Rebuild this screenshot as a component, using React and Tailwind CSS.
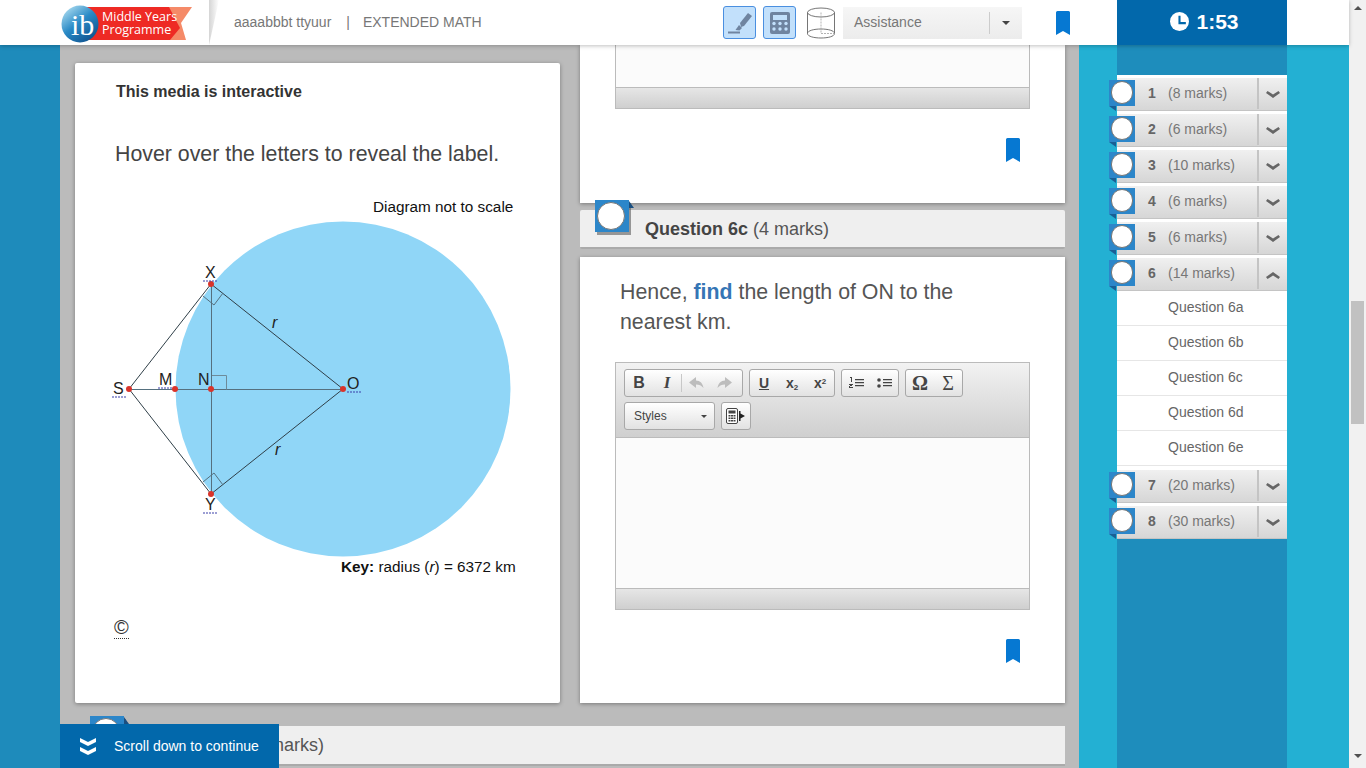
import React from 'react';

const sections = [
  { n: 1, marks: 8 },
  { n: 2, marks: 6 },
  { n: 3, marks: 10 },
  { n: 4, marks: 6 },
  { n: 5, marks: 6 },
  { n: 6, marks: 14, open: true },
  { n: 7, marks: 20 },
  { n: 8, marks: 30 },
];

const subQuestions = ['Question 6a', 'Question 6b', 'Question 6c', 'Question 6d', 'Question 6e'];

function Bookmark({ className }) {
  return (
    <svg viewBox="0 0 14 24" className={className}>
      <path d="M1.500 0h11a1.500 1.500 0 0 1 1.500 1.500V24l-7-4-7 4V1.500A1.500 1.500 0 0 1 1.500 0z" fill="#0678d2" />
    </svg>
  );
}

function Logo() {
  return (
    <svg width="132" height="42" viewBox="0 0 132 42" className="shrink-0">
      <defs>
        <linearGradient id="ibBlue" x1="0.1" y1="0.1" x2="0.8" y2="1">
          <stop offset="0" stopColor="#a5d8ee" />
          <stop offset="0.45" stopColor="#2a8ac6" />
          <stop offset="1" stopColor="#0d4f8c" />
        </linearGradient>
      </defs>
      <path d="M105 5h26l-11 16 5 17h-20z" fill="#f58a68" />
      <path d="M20 5h88l11 21-10 12H20z" fill="#ee2a24" />
      <circle cx="19" cy="22" r="18.500" fill="url(#ibBlue)" />
      <text x="10" y="33" fontSize="30" fontFamily="Liberation Serif" fill="#fff">ib</text>
      <text x="41" y="18.500" fontSize="12.500" fontFamily="Open Sans" fill="#fff">Middle Years</text>
      <text x="41" y="31.500" fontSize="12.500" fontFamily="Open Sans" fill="#fff">Programme</text>
    </svg>
  );
}

function Highlighter() {
  return (
    <svg width="24" height="24" viewBox="0 0 24 24" fill="#6f84a0">
      <path d="M12 12 20 2l4 3-8 10-3 1z" />
      <path d="M0 20.500h12V22.500H0z" />
      <path d="M11 14l3 3-2.500 2.500-4-.5z" />
    </svg>
  );
}

function Calculator() {
  return (
    <svg width="20" height="22" viewBox="0 0 20 22">
      <rect width="20" height="22" rx="2" fill="#6f84a0" />
      <rect x="3" y="3" width="14" height="5" fill="#c2e0fb" />
      {[4, 10, 16].map((x) =>
        [11.5, 17].map((y) => <circle key={`${x}-${y}`} cx={x} cy={y} r="1.700" fill="#c2e0fb" />)
      )}
    </svg>
  );
}

function Cylinder() {
  return (
    <svg width="30" height="32" viewBox="0 0 30 32" fill="none" stroke="#666" strokeWidth="0.9">
      <ellipse cx="15" cy="5.500" rx="13.500" ry="4.500" fill="#fff" />
      <path d="M1.500 5.500v21M28.500 5.500v21" />
      <path d="M1.500 26.500c0 6 27 6 27 0 0-6-27-6-27 0z" />
      <path d="M15 5.500v21M15 26.500h13.500" stroke="#aaa" strokeDasharray="2 1" />
    </svg>
  );
}

function ClockIcon() {
  return (
    <svg width="19" height="19" viewBox="0 0 18 18">
      <circle cx="9" cy="9" r="9" fill="#fff" />
      <path d="M8 3.500h2v6h5v2H8z" fill="#0268ab" />
    </svg>
  );
}

function Chevron({ up }) {
  return (
    <svg width="14" height="8" viewBox="0 0 14 8">
      <path d={up ? 'M0 6 7 1l7 5-1.500 2L7 4.500 1.500 8z' : 'M0 2 1.500 0 7 3.500 12.500 0 14 2 7 7z'} fill="#666" />
    </svg>
  );
}

function Header() {
  return (
    <header className="relative z-20 flex h-[45px] shrink-0 items-center bg-white pl-[61px] shadow-[0_1px_4px_rgba(0,0,0,0.25)]">
      <Logo />
      <div className="ml-[16px] h-[45px] w-[10px] bg-gradient-to-r from-[#d5d5d5] to-white [clip-path:polygon(0_0,100%_0,0_100%)]" />
      <div className="ml-[15px] w-[247px] whitespace-nowrap text-[14px] text-[#777]">
        aaaabbbt ttyuur<span className="ml-[15px] mr-[13px]">|</span>EXTENDED MATH
      </div>
      <div className="ml-[242px] flex h-[33px] w-[33px] items-center justify-center rounded-[3px] border border-[#4a8fe0] bg-[#c2e0fb]">
        <Highlighter />
      </div>
      <div className="ml-[7px] flex h-[33px] w-[33px] items-center justify-center rounded-[3px] border border-[#4a8fe0] bg-[#c2e0fb]">
        <Calculator />
      </div>
      <div className="ml-[10px]">
        <Cylinder />
      </div>
      <div className="ml-[7px] flex h-[32px] w-[179px] items-center bg-gradient-to-b from-[#f6f6f6] to-[#ececec] pl-[11px] text-[14px] text-[#777]">
        <span className="w-[135px]">Assistance</span>
        <span className="h-[22px] w-px bg-[#ccc]" />
        <span className="ml-[12px] h-0 w-0 border-x-[4px] border-t-[4px] border-x-transparent border-t-[#444]" />
      </div>
      <Bookmark className="ml-[34px] h-[24px] w-[14px]" />
      <div className="ml-[47px] flex h-[45px] w-[170px] items-center justify-center gap-[7px] bg-[#0268ab] pb-[2px] pl-[5px] text-[21px] font-bold text-white">
        <ClockIcon />
        1:53
      </div>
    </header>
  );
}

function QuestionBadge({ className }) {
  return (
    <div className={`absolute h-[32px] w-[34px] bg-[#2c86c9] shadow-[2px_3px_0_rgba(90,90,90,0.6)] ${className}`}>
      <div className="absolute left-[2px] top-[2px] h-[28px] w-[28px] rounded-full border border-[#777] bg-white" />
      <div className="absolute left-full top-[1px] h-0 w-0 border-b-[7px] border-r-[5px] border-b-[#1a4f80] border-r-transparent" />
    </div>
  );
}

function TbButton({ children, className = '' }) {
  return <span className={`flex h-full w-[28px] items-center justify-center text-[#444] ${className}`}>{children}</span>;
}

function TbGroup({ width, children }) {
  return (
    <div
      style={{ width }}
      className="flex h-[28px] items-center rounded-[3px] border border-[#a8a8a8] bg-gradient-to-b from-white to-[#e2e2e2]"
    >
      {children}
    </div>
  );
}

function Arrow({ flip }) {
  return (
    <svg width="15" height="12" viewBox="0 0 15 12" className={flip ? '-scale-x-100' : ''}>
      <path d="M7 0 0 5.500 7 11V7.500c3 0 5.500 1 7.500 3.500C14 6.500 11 3.500 7 3.500z" fill="#bdbdbd" />
    </svg>
  );
}

function ListIcon({ bullets }) {
  return (
    <svg width="15" height="12" viewBox="0 0 15 12" fill="#444">
      {bullets ? (
        <>
          <circle cx="2" cy="3" r="1.800" />
          <circle cx="2" cy="9" r="1.800" />
        </>
      ) : (
        <path d="M1 0h2v5H2V1H1zM0 7h4v1H1v2h3v1H0V9h3V8H0z" />
      )}
      <path d="M6 2h9v1.300H6zM6 5h9v1.300H6zM6 8h9v1.300H6z" />
    </svg>
  );
}

function CalcTool() {
  return (
    <svg width="20" height="16" viewBox="0 0 20 16">
      <rect x="0.500" y="0.500" width="11" height="15" rx="1.500" fill="#fff" stroke="#444" />
      <path d="M2.500 2.500h7v3h-7zM2.500 7h2v1.500h-2zM5 7h2v1.500H5zM7.500 7h2v1.500h-2zM2.500 9.500h2V11h-2zM5 9.500h2V11H5zM7.500 9.500h2V11h-2zM2.500 12h2v1.500h-2zM5 12h2v1.500H5zM7.500 12h2v1.500h-2z" fill="#444" />
      <path d="M13 3h1.500v2.500L19 8l-4.500 2.500V13H13z" fill="#222" />
    </svg>
  );
}

function Editor() {
  return (
    <div className="mt-[25px] ml-[35px] w-[415px] border border-[#bbb]">
      <div className="h-[74px] bg-gradient-to-b from-[#f2f2f2] to-[#cfcfcf] px-[8px] pt-[6px]">
        <div className="flex gap-[6px]">
          <TbGroup width={119}>
            <TbButton><span className="text-[16px] font-bold">B</span></TbButton>
            <TbButton><span className="font-['Liberation_Serif'] text-[17px] font-bold italic">I</span></TbButton>
            <span className="h-[18px] w-px bg-[#c8c8c8]" />
            <TbButton><Arrow /></TbButton>
            <TbButton><Arrow flip /></TbButton>
          </TbGroup>
          <TbGroup width={86}>
            <TbButton><span className="text-[14px] font-bold underline">U</span></TbButton>
            <TbButton><span className="text-[14px] font-bold">x<sub className="text-[8px]">2</sub></span></TbButton>
            <TbButton><span className="text-[14px] font-bold">x<sup className="text-[8px]">2</sup></span></TbButton>
          </TbGroup>
          <TbGroup width={58}>
            <TbButton><ListIcon /></TbButton>
            <TbButton><ListIcon bullets /></TbButton>
          </TbGroup>
          <TbGroup width={58}>
            <TbButton><span className="font-['Liberation_Serif'] text-[20px] font-bold">Ω</span></TbButton>
            <TbButton><span className="font-['Liberation_Serif'] text-[20px]">Σ</span></TbButton>
          </TbGroup>
        </div>
        <div className="mt-[5px] flex gap-[6px]">
          <TbGroup width={91}>
            <span className="ml-[9px] w-[67px] text-[12px] text-[#444]">Styles</span>
            <span className="h-0 w-0 border-x-[3px] border-t-[3px] border-x-transparent border-t-[#444]" />
          </TbGroup>
          <TbGroup width={30}>
            <TbButton><CalcTool /></TbButton>
          </TbGroup>
        </div>
      </div>
      <div className="h-[151px] border-t border-[#bbb] bg-[#fbfbfb]" />
      <div className="h-[21px] border-t border-[#bbb] bg-gradient-to-b from-[#e6e6e6] to-[#cfcfcf]" />
    </div>
  );
}

function Diagram() {
  const dots = [[129, 389], [175, 389], [211, 389], [343, 389], [211, 284], [211, 494]];
  return (
    <svg width="485" height="460" viewBox="75 180 485 460" className="absolute left-0 top-[117px]">
      <circle cx="343" cy="389" r="167.500" fill="#90d6f7" />
      <text x="373" y="212" fontSize="15.300" fill="#111" fontFamily="Liberation Sans">Diagram not to scale</text>
      <g fill="none" stroke="#2f3f48" strokeWidth="1">
        <path d="M129 389 211 284 343 389 211 494z" />
        <path d="M129 389.500H343M211.500 284V494" stroke="#55707f" />
        <path d="M203 296l11 9 9-12M203 482l11-9 9 12" stroke="#55707f" />
        <path d="M212 375.500h14.500v14" stroke="#6d8b9a" />
      </g>
      <g fill="#d9342b">
        {dots.map(([cx, cy]) => (
          <circle key={`${cx}-${cy}`} cx={cx} cy={cy} r="3" />
        ))}
      </g>
      <g fontSize="16" fill="#222" fontFamily="Liberation Sans">
        <text x="205" y="278">X</text>
        <text x="113" y="394">S</text>
        <text x="159" y="385">M</text>
        <text x="198" y="385">N</text>
        <text x="347" y="389">O</text>
        <text x="205" y="510">Y</text>
        <text x="272" y="328" fontStyle="italic">r</text>
        <text x="275" y="455" fontStyle="italic">r</text>
      </g>
      <g stroke="#3b3fa8" strokeDasharray="2 1" strokeWidth="1">
        <path d="M203 281h14M112 397h14M158 388h15M347 392h14M203 513h14" />
      </g>
      <text x="341" y="572" fontSize="15.300" fill="#111" fontFamily="Liberation Sans">
        <tspan fontWeight="bold">Key:</tspan> radius (<tspan fontStyle="italic">r</tspan>) = 6372 km
      </text>
    </svg>
  );
}

function SideItem({ n, marks, open }) {
  return (
    <div className="relative h-[36px] bg-white pt-[3px]">
      <div className="flex h-[33px] items-center border-b border-[#c4c4c4] bg-gradient-to-b from-[#f0f0f0] to-[#d6d6d6] pb-[2px] pl-[31px] text-[14px]">
        <span className="w-[20px] font-bold text-[#666]">{n}</span>
        <span className="w-[89px] text-[#777]">({marks} marks)</span>
        <span className="flex h-[31px] w-[30px] items-center justify-center border-l-2 border-[#c4c4c4] pt-[4px]">
          <Chevron up={open} />
        </span>
      </div>
      <div className="absolute -left-[8px] top-[5px] h-[26px] w-[26px] bg-[#2c86c9]">
        <div className="absolute left-[2px] top-[1px] h-[23px] w-[22px] rounded-full border border-[#777] bg-white" />
        <div className="absolute left-0 top-full h-0 w-0 border-t-[5px] border-l-[7px] border-t-[#1a5f95] border-l-transparent" />
      </div>
    </div>
  );
}

function Sidebar() {
  return (
    <aside className="w-[270px] shrink-0 bg-[#23b0d3] pl-[38px]">
      <div className="h-full w-[170px] bg-[#1e8dbc] pt-[30px]">
        {sections.map((s) => (
          <React.Fragment key={s.n}>
            <SideItem {...s} />
            {s.open && (
              <div className="bg-white pb-px">
                {subQuestions.map((q) => (
                  <div key={q} className="flex h-[35px] items-center border-b border-[#e6e6e6] pb-[2px] pl-[51px] text-[14px] text-[#666]">
                    {q}
                  </div>
                ))}
              </div>
            )}
          </React.Fragment>
        ))}
      </div>
    </aside>
  );
}

export default function App() {
  return (
    <div className="flex h-[768px] w-[1366px] overflow-hidden bg-[#1e8bbb] font-['Liberation_Sans',Arial,sans-serif]">
      <div className="flex w-[1349px] shrink-0 flex-col">
        <Header />
        <div className="relative flex min-h-0 flex-1 pl-[60px]">
          <main className="w-[1019px] shrink-0 overflow-hidden bg-[#bbbbbb] pl-[15px]">
            <div className="flex gap-[20px]">
              <section className="relative mt-[18px] h-[640px] w-[485px] rounded-[2px] bg-white shadow-[0_1px_4px_rgba(0,0,0,0.35)]">
                <div className="pl-[41px] pt-[17px] text-[16px] font-bold text-[#333]">This media is interactive</div>
                <div className="pl-[40px] pt-[35px] text-[21.330px] text-[#444]">Hover over the letters to reveal the label.</div>
                <Diagram />
                <div className="absolute left-[39px] top-[553px] border-b border-dotted border-[#333] text-[20px] leading-[22px] text-[#333]">©</div>
              </section>
              <div className="w-[485px]">
                <section className="h-[158px] bg-white pl-[35px] shadow-[0_1px_4px_rgba(0,0,0,0.35)]">
                  <div className="flex h-[64px] w-[415px] flex-col justify-end border-x border-b border-[#bbb] bg-[#fbfbfb]">
                    <div className="h-[21px] border-t border-[#bbb] bg-gradient-to-b from-[#e6e6e6] to-[#cfcfcf]" />
                  </div>
                  <div className="mt-[29px] flex justify-end pr-[45px]">
                    <Bookmark className="h-[24px] w-[14px]" />
                  </div>
                </section>
                <div className="relative mt-[7px] flex h-[39px] items-center rounded-[2px] border-b-2 border-[#aaa] bg-[#efefef] pl-[65px] pt-[2px] text-[18px] text-[#555]">
                  <QuestionBadge className="left-[15px] -top-[10px]" />
                  <span className="font-bold text-[#444]">Question 6c</span>
                  <span className="ml-[5px]">(4 marks)</span>
                </div>
                <section className="mt-[8px] h-[446px] bg-white pt-[20px] shadow-[0_1px_4px_rgba(0,0,0,0.35)]">
                  <p className="w-[400px] pl-[40px] text-[21.330px] leading-[30px] text-[#555]">
                    Hence, <b className="text-[#3575b5]">find</b> the length of ON to the nearest km.
                  </p>
                  <Editor />
                  <div className="mt-[29px] flex justify-end pr-[45px]">
                    <Bookmark className="h-[24px] w-[14px]" />
                  </div>
                </section>
              </div>
            </div>
            <div className="relative mt-[23px] flex h-[40px] w-[990px] items-center border-b-2 border-[#aaa] bg-[#efefef] pl-[65px] text-[18px] text-[#555]">
              <QuestionBadge className="left-[15px] -top-[10px]" />
              <span className="font-bold text-[#444]">Question 7</span>
              <span className="ml-[5px]">(20 marks)</span>
            </div>
          </main>
          <Sidebar />
          <div className="absolute bottom-0 left-[60px] flex h-[44px] w-[219px] items-center bg-[#0268ab] pl-[19px] text-[14px] text-white">
            <svg width="18" height="17" viewBox="0 0 18 17" fill="#fff">
              <path d="M1 0l8 4 8-4v4l-8 4-8-4zM1 9l8 4 8-4v4l-8 4-8-4z" />
            </svg>
            <span className="ml-[17px]">Scroll down to continue</span>
          </div>
        </div>
      </div>
      <div className="flex w-[17px] shrink-0 flex-col items-center bg-[#f1f1f1]">
        <span className="mt-[6px] h-0 w-0 border-x-[4px] border-b-[4px] border-x-transparent border-b-[#505050]" />
        <div className="mt-[291px] h-[123px] w-[13px] bg-[#c1c1c1]" />
        <span className="mt-[330px] h-0 w-0 border-x-[4px] border-t-[4px] border-x-transparent border-t-[#505050]" />
      </div>
    </div>
  );
}
